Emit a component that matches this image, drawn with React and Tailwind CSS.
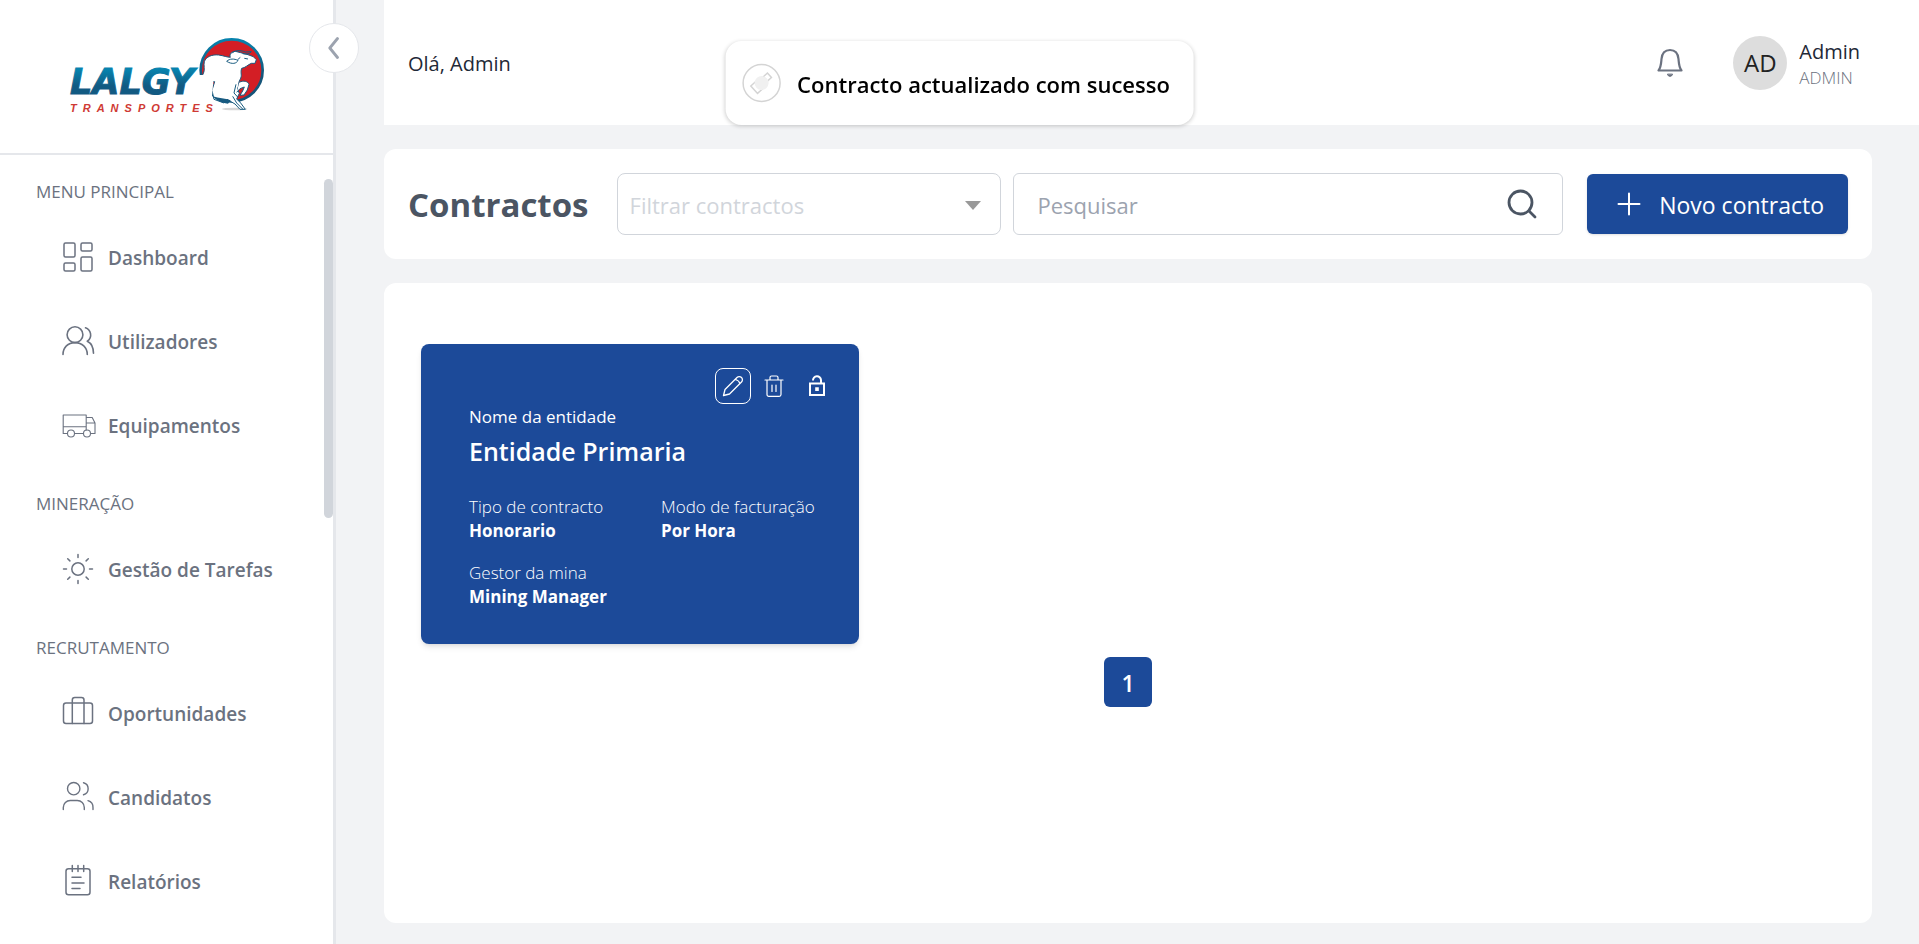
import { useState } from "react";

function Icon({ children, width = "1.3" }) {
  return (
    <svg
      viewBox="0 -1 34 34"
      className="size-[34px] shrink-0"
      fill="none"
      stroke="currentColor"
      strokeWidth={width}
      strokeLinecap="round"
      strokeLinejoin="round"
      aria-hidden="true"
    >
      {children}
    </svg>
  );
}

const icons = {
  dashboard: (
    <Icon width="1.5">
      <rect x="2" y="2" width="11" height="14" rx="1.5" />
      <rect x="2" y="22" width="11" height="8" rx="1.5" />
      <rect x="19" y="2" width="11" height="8" rx="1.5" />
      <rect x="19" y="16" width="11" height="14" rx="1.5" />
    </Icon>
  ),
  users: (
    <Icon width="1.6">
      <circle cx="13" cy="9.7" r="7.9" />
      <path d="M1 29.5C1 22.5 6 17.6 13 17.6S25.3 22.5 25.3 29.5M23.5 2.7C28.8 4.5 31 12 25.3 16.2C29 18 31.5 22.5 31.5 28.3" />
    </Icon>
  ),
  truck: (
    <Icon width="1.1">
      <path d="M5.5 24.5H1.2V6h23v15M12.500 24.500h9M24.200 8.500h6l2.800 5.500v10.500h-4.500M24.200 14H33M1.200 17.700h23" />
      <circle cx="9" cy="24.500" r="3.500" />
      <circle cx="25" cy="24.500" r="3.500" />
    </Icon>
  ),
  sun: (
    <Icon width="1.5">
      <circle cx="16" cy="16" r="6.200" />
      <path d="M16 1.500v3M16 27.500v3M1.500 16h3M27.500 16h3M5.700 5.700l2.200 2.200M24.100 24.100l2.200 2.200M5.700 26.300l2.200-2.200M24.100 7.900l2.200-2.200" />
    </Icon>
  ),
  briefcase: (
    <Icon width="1.5">
      <rect x="1.500" y="6" width="29" height="20.500" rx="2.500" />
      <path d="M10.300 26.500V3a2.500 2.500 0 0 1 2.500-2.500h6.700A2.500 2.500 0 0 1 22 3v23.500" />
    </Icon>
  ),
  people: (
    <Icon width="1.4">
      <circle cx="11.700" cy="7.700" r="6.200" />
      <path d="M1.300 28.500v-2a7 7 0 0 1 7-7h7a7 7 0 0 1 7 7v2M21.500 1.700a6.200 6.200 0 0 1 0 12M26 19.700a7 7 0 0 1 5 7v1.800" />
    </Icon>
  ),
  report: (
    <Icon width="1.5">
      <rect x="4" y="3.700" width="24" height="26" rx="2.500" />
      <path d="M10.300.500v6M16 .500v6M21.700.500v6M10 12.300h9M10 17.900h12M10 23.500h8" />
    </Icon>
  ),
};

const sections = [
  {
    title: "MENU PRINCIPAL",
    items: [
      ["Dashboard", "dashboard"],
      ["Utilizadores", "users"],
      ["Equipamentos", "truck"],
    ],
  },
  { title: "MINERAÇÃO", items: [["Gestão de Tarefas", "sun"]] },
  {
    title: "RECRUTAMENTO",
    items: [
      ["Oportunidades", "briefcase"],
      ["Candidatos", "people"],
      ["Relatórios", "report"],
    ],
  },
];

function Logo() {
  return (
    <svg viewBox="66 33 202 82" className="h-[82px] w-[202px]" role="img" aria-label="Lalgy Transportes">
      <defs>
        <linearGradient id="word" x1="0" y1="0" x2="0" y2="1">
          <stop offset="0.200" stopColor="#0782ad" />
          <stop offset="0.600" stopColor="#125a82" />
        </linearGradient>
        <linearGradient id="ring" x1="0" y1="0" x2="0" y2="1">
          <stop offset="0" stopColor="#0782ad" />
          <stop offset="0.600" stopColor="#155579" />
        </linearGradient>
      </defs>
      <g transform="translate(192 30) scale(0.3333)">
        <ellipse cx="128" cy="234" rx="38" ry="4" fill="#d6d6d6" />
        <circle cx="119" cy="118" r="93" fill="#d31e25" stroke="url(#ring)" strokeWidth="8" />
        <path
          d="M20 150L34 128C40 116 34 103 37 92C42 77 60 70 80 72C95 74 106 79 115 79C111 69 119 62 130 61L146 65L165 70L184 77L193 86L189 97L178 97C168 101 159 111 149 112C144 126 152 133 144 146C138 155 142 164 136 174L142 187L134 204L146 216L160 235H144L129 219L105 205L96 216L66 205L60 178L68 152Z"
          fill="#fff"
          stroke="#175a80"
          strokeWidth="3"
          strokeLinejoin="round"
        />
        <path d="M10 132H66L58 215L20 190Z" fill="#fff" />
        <path d="M62 196C82 202 98 202 116 208L108 218C88 216 70 207 62 196Z" fill="#175a80" />
        <path
          d="M142 154C154 147 168 151 171 160L166 177L156 192L144 193L152 180L157 168L144 173L134 184"
          fill="#fff"
          stroke="#175a80"
          strokeWidth="3"
          strokeLinejoin="round"
        />
        <path
          d="M104 91C113 82 127 83 138 88C134 98 120 101 104 91M120 67C126 57 148 57 160 63L178 62C173 69 164 71 152 68M157 82L168 84M137 86L145 79"
          fill="none"
          stroke="#175a80"
          strokeWidth="3"
        />
        <path
          d="M122 196L134 216L153 235M132 160L126 186L137 198"
          fill="none"
          stroke="#175a80"
          strokeWidth="3"
        />
      </g>
      <text
        x="70"
        y="93"
        fontFamily="DejaVu Sans, sans-serif"
        fontSize="35"
        fontWeight="700"
        fontStyle="italic"
        fill="url(#word)"
        stroke="url(#word)"
        strokeWidth="1"
      >
        LALGY
      </text>
      <text
        x="70"
        y="111"
        fontFamily="Liberation Sans, Arial, sans-serif"
        fontSize="11"
        fontWeight="700"
        fontStyle="italic"
        letterSpacing="6"
        fill="#cf3a34"
      >
        TRANSPORTES
      </text>
    </svg>
  );
}

function Sidebar() {
  return (
    <aside className="relative flex w-[336px] shrink-0 flex-col border-r-3 border-[#e5e7eb] bg-white">
      <div className="flex h-[155px] shrink-0 items-center justify-center border-b-2 border-[#e5e7eb] pb-1">
        <Logo />
      </div>
      <button
        type="button"
        aria-label="Recolher menu"
        className="absolute top-[23px] -right-[26px] flex size-[50px] items-center justify-center rounded-full border border-[#e5e7eb] bg-white text-[#9ca3af]"
      >
        <svg viewBox="0 0 12 22" className="h-[22px] w-3" fill="none" stroke="currentColor" strokeWidth="2.800" strokeLinecap="round" strokeLinejoin="round">
          <path d="M9.500 1.500L1.800 11l7.700 9.500" />
        </svg>
      </button>
      <nav className="flex flex-col text-[#6b7280]">
        {sections.map((s) => (
          <section key={s.title}>
            <h2 className="h-[60px] pt-[25px] pl-9 text-[17px] leading-6 font-normal">{s.title}</h2>
            <ul>
              {s.items.map(([label, icon]) => (
                <li key={label}>
                  <a href="#" className="flex h-[84px] items-center gap-3 pl-[62px] text-[19px] font-semibold">
                    {icons[icon]}
                    <span className="pt-0.5">{label}</span>
                  </a>
                </li>
              ))}
            </ul>
          </section>
        ))}
      </nav>
      <div className="absolute top-[179px] right-0 h-[339px] w-[9px] rounded-full bg-[#d1d5db]" />
    </aside>
  );
}

function Header() {
  return (
    <header className="flex h-[125px] shrink-0 items-center justify-between bg-white pr-[59px] pl-6 text-[#1f2937]">
      <p className="pt-0.5 text-xl">Olá, Admin</p>
      <div className="flex items-center">
        <button type="button" aria-label="Notificações" className="mr-[49px] text-[#6b7280]">
          <svg viewBox="0 0 28 30" className="h-[30px] w-7" fill="none" stroke="currentColor" strokeWidth="2.200" strokeLinejoin="round" strokeLinecap="round">
            <path d="M2.500 22.500H25.500C23 19.500 23 17 22.500 11C22 5 19 2 14 2S6 5 5.500 11C5 17 5 19.500 2.500 22.500Z" />
            <path d="M11.500 26.500C12 29 16 29 16.500 26.500Z" fill="currentColor" strokeWidth="1" />
          </svg>
        </button>
        <span className="mr-3 flex size-[54px] items-center justify-center rounded-full bg-[#dddddd] text-2xl text-[#222]">AD</span>
        <div className="pt-0.5">
          <p className="text-xl leading-7">Admin</p>
          <p className="text-[17px] leading-6 font-light text-[#6b7280]">ADMIN</p>
        </div>
      </div>
    </header>
  );
}

function Toolbar() {
  const [query, setQuery] = useState("");
  return (
    <div className="mt-6 mr-[47px] flex shrink-0 items-center rounded-xl bg-white p-6">
      <h1 className="mr-7 pt-0.5 text-[33px] leading-[50px] font-bold text-[#4b5563]">Contractos</h1>
      <div className="relative mr-3 w-96">
        <select
          aria-label="Filtrar contractos"
          defaultValue=""
          className="h-[62px] w-full appearance-none rounded-lg border border-[#d1d5db] bg-white px-3 pt-0.5 text-[22px] text-[#d1d5db]"
        >
          <option value="">Filtrar contractos</option>
        </select>
        <svg viewBox="0 0 16 9" className="pointer-events-none absolute top-7 right-5 h-[9px] w-4 fill-[#999]" aria-hidden="true">
          <path d="M0 0H16L8 9Z" />
        </svg>
      </div>
      <form role="search" onSubmit={(e) => e.preventDefault()} className="relative mr-6 min-w-0 flex-1">
        <input
          type="text"
          aria-label="Pesquisar"
          placeholder="Pesquisar"
          value={query}
          onChange={(e) => setQuery(e.target.value)}
          className="h-[62px] w-full rounded-md border border-[#d1d5db] bg-white pt-0.5 pr-20 pl-6 text-[22px] text-[#374151] placeholder:text-[#9ca3af]"
        />
        <button type="submit" aria-label="Pesquisar agora" className="absolute top-4 right-[26px] text-[#4b5563]">
          <svg viewBox="0 0 30 30" className="size-[30px]" fill="none" stroke="currentColor" strokeWidth="2.800" strokeLinecap="round">
            <circle cx="13.500" cy="13.500" r="11.500" />
            <path d="M22 22l6 6" />
          </svg>
        </button>
      </form>
      <button type="button" className="flex h-[60px] items-center gap-[18px] rounded-md bg-[#1c4a99] pr-6 pl-[30px] text-[23px] text-white shadow-sm">
        <svg viewBox="0 0 24 24" className="size-6" fill="none" stroke="currentColor" strokeWidth="2" strokeLinecap="round" aria-hidden="true">
          <path d="M12 1.500v21M1.500 12h21" />
        </svg>
        <span className="pt-0.5">Novo contracto</span>
      </button>
    </div>
  );
}

function Field({ label, value }) {
  return (
    <div>
      <dt className="font-light">{label}</dt>
      <dd className="font-bold">{value}</dd>
    </div>
  );
}

function ContractCard() {
  return (
    <article className="h-[300px] w-[438px] rounded-lg bg-[#1c4a99] pt-6 pr-6 pl-12 text-white shadow-md">
      <div className="flex items-center justify-end">
        <button type="button" aria-label="Editar" className="mr-3 flex size-9 items-center justify-center rounded-lg border border-white">
          <svg viewBox="0 0 22 22" className="size-[22px]" fill="none" stroke="currentColor" strokeWidth="1.300" strokeLinejoin="round">
            <path d="M1.500 20.500L3 14.500L15 2.500A3 3 0 0 1 19.500 7L7.500 19ZM13.500 4.500Q17 5.500 18 8.500" />
          </svg>
        </button>
        <button type="button" aria-label="Eliminar" className="mr-[22px]">
          <svg viewBox="0 0 22 24" className="h-6 w-[22px]" fill="none" stroke="currentColor" strokeWidth="1.200" strokeLinejoin="round" strokeLinecap="round">
            <path d="M2 6H20M4 6V20.500A1.800 1.800 0 0 0 5.800 22.300H16.200A1.800 1.800 0 0 0 18 20.500V6M7 6V3.500A1.500 1.500 0 0 1 8.500 2H13.500A1.500 1.500 0 0 1 15 3.500V6M9 11v6.500M13 11v6.500" />
          </svg>
        </button>
        <button type="button" aria-label="Desbloquear" className="mr-2">
          <svg viewBox="0 0 20 24" className="h-6 w-5" fill="none" stroke="currentColor" strokeWidth="2">
            <path d="M3 9.500H17V21H3ZM6 6.500A4 4 0 0 1 14 6V9.500" />
            <path d="M8.200 13.300h3.600v3.600h-3.600z" fill="currentColor" stroke="none" />
          </svg>
        </button>
      </div>
      <p className="pt-px text-[17px] leading-6">Nome da entidade</p>
      <h2 className="mt-1 text-[25px] leading-9 font-semibold">Entidade Primaria</h2>
      <dl className="mt-[26px] grid grid-cols-2 gap-[18px] text-[17px] leading-6">
        <Field label="Tipo de contracto" value="Honorario" />
        <Field label="Modo de facturação" value="Por Hora" />
        <Field label="Gestor da mina" value="Mining Manager" />
      </dl>
    </article>
  );
}

function Toast() {
  return (
    <div role="status" className="fixed top-[41px] left-1/2 flex h-[84px] -translate-x-1/2 items-center gap-4 rounded-2xl bg-white pr-6 pl-4 whitespace-nowrap shadow-[0_1px_4px_rgba(0,0,0,0.2)]">
      <svg viewBox="0 0 40 40" className="size-10" fill="none" stroke="#d4d4d4" aria-hidden="true">
        <circle cx="20" cy="20" r="18.500" strokeWidth="1.500" />
        <g transform="rotate(-42 20 20)">
          <path d="M17 15H10V25H17M24 16.500H31V22.500H24" strokeWidth="1.500" />
          <circle cx="20" cy="20" r="7" fill="#f0f0f0" stroke="none" />
        </g>
      </svg>
      <p className="pt-0.5 text-[22px] font-semibold text-black">Contracto actualizado com sucesso</p>
    </div>
  );
}

export default function App() {
  return (
    <div className="flex min-h-screen bg-[#f2f3f5] font-['Open_Sans','Noto_Sans',sans-serif]">
      <Sidebar />
      <main className="flex min-w-0 flex-1 flex-col pl-12">
        <Header />
        <Toolbar />
        <div className="mt-6 mr-[47px] mb-[21px] flex flex-1 flex-col rounded-xl bg-white">
          <div className="px-[37px] pt-[61px]">
            <ContractCard />
          </div>
          <nav aria-label="Paginação" className="mt-[13px] flex justify-center">
            <button type="button" aria-current="page" className="h-[50px] w-12 rounded-md bg-[#1c4a99] pt-0.5 text-[23px] font-semibold text-white">
              1
            </button>
          </nav>
        </div>
      </main>
      <Toast />
    </div>
  );
}
